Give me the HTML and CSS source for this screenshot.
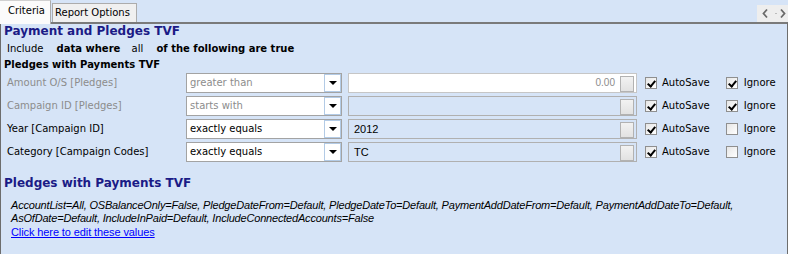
FILE: index.html
```html
<!DOCTYPE html>
<html lang="en">
<head>
    <meta charset="UTF-8">
    <title>Payment and Pledges TVF - Criteria</title>
    <link rel="stylesheet" href="styles.css">
</head>
<body>
    <div class="window">
        <div class="tabbar">
            <div class="tab active">Criteria</div>
            <div class="tab">Report Options</div>
            <div class="tab-nav">
                <svg width="31" height="17" viewBox="0 0 31 17">
                    <path d="M10 4.5 L6.5 8.5 L10 12.5" fill="none" stroke="#6a6a6a" stroke-width="1.8"/>
                    <rect x="18.5" y="8" width="1" height="1" fill="#8a8a8a"/>
                    <path d="M24 4.5 L27.5 8.5 L24 12.5" fill="none" stroke="#6a6a6a" stroke-width="1.8"/>
                </svg>
            </div>
        </div>

        <div class="panel">
            <h1 class="title">Payment and Pledges TVF</h1>
            <div class="include-line">
                <span>Include</span>
                <b class="gap-data">data where</b>
                <span class="gap-all">all</span>
                <b class="gap-of">of the following are true</b>
            </div>

            <h2 class="group-title">Pledges with Payments TVF</h2>

            <div class="criteria">
                <div class="row">
                    <div class="row-label disabled">Amount O/S [Pledges]</div>
                    <div class="combo disabled">
                        <span class="combo-text">greater than</span>
                        <span class="combo-btn"><i class="arrow"></i></span>
                    </div>
                    <div class="value-box white">
                        <span class="value-text right grey">0.00</span>
                        <span class="value-btn"></span>
                    </div>
                    <label class="check"><span class="check-box checked"></span><span class="check-label">AutoSave</span></label>
                    <label class="check ignore"><span class="check-box checked"></span><span class="check-label">Ignore</span></label>
                </div>

                <div class="row">
                    <div class="row-label disabled">Campaign ID [Pledges]</div>
                    <div class="combo disabled">
                        <span class="combo-text">starts with</span>
                        <span class="combo-btn"><i class="arrow"></i></span>
                    </div>
                    <div class="value-box">
                        <span class="value-text"></span>
                        <span class="value-btn"></span>
                    </div>
                    <label class="check"><span class="check-box checked"></span><span class="check-label">AutoSave</span></label>
                    <label class="check ignore"><span class="check-box checked"></span><span class="check-label">Ignore</span></label>
                </div>

                <div class="row">
                    <div class="row-label">Year [Campaign ID]</div>
                    <div class="combo">
                        <span class="combo-text">exactly equals</span>
                        <span class="combo-btn"><i class="arrow"></i></span>
                    </div>
                    <div class="value-box">
                        <span class="value-text">2012</span>
                        <span class="value-btn"></span>
                    </div>
                    <label class="check"><span class="check-box checked"></span><span class="check-label">AutoSave</span></label>
                    <label class="check ignore"><span class="check-box"></span><span class="check-label">Ignore</span></label>
                </div>

                <div class="row">
                    <div class="row-label">Category [Campaign Codes]</div>
                    <div class="combo">
                        <span class="combo-text">exactly equals</span>
                        <span class="combo-btn"><i class="arrow"></i></span>
                    </div>
                    <div class="value-box">
                        <span class="value-text">TC</span>
                        <span class="value-btn"></span>
                    </div>
                    <label class="check"><span class="check-box checked"></span><span class="check-label">AutoSave</span></label>
                    <label class="check ignore"><span class="check-box"></span><span class="check-label">Ignore</span></label>
                </div>
            </div>

            <div class="summary">
                <h2 class="title summary-title">Pledges with Payments TVF</h2>
                <p class="summary-text">AccountList=All, OSBalanceOnly=False, PledgeDateFrom=Default, PledgeDateTo=Default, PaymentAddDateFrom=Default, PaymentAddDateTo=Default,<br>AsOfDate=Default, IncludeInPaid=Default, IncludeConnectedAccounts=False</p>
                <a href="#" class="edit-link">Click here to edit these values</a>
            </div>
        </div>
    </div>
</body>
</html>
```

FILE: styles.css
```css
* {
    margin: 0;
    padding: 0;
    box-sizing: border-box;
}

body {
    font-family: 'DejaVu Sans', Tahoma, sans-serif;
    font-size: 10px;
    background: #d6e4f7;
    color: #000;
    width: 788px;
    height: 254px;
    overflow: hidden;
}

.window {
    height: 254px;
    display: flex;
    flex-direction: column;
}

/* tab strip */
.tabbar {
    height: 22px;
    display: flex;
    align-items: flex-end;
    position: relative;
    z-index: 2;
}

.tab {
    height: 19px;
    width: 85px;
    padding-left: 2px;
    line-height: 18px;
    background: #f0f0f0;
    border: 1px solid #acacac;
    border-bottom: none;
    margin-left: 1px;
    white-space: nowrap;
}

.tab.active {
    height: 24px;
    width: 51px;
    margin: 0 0 -2px 0;
    padding-left: 8px;
    line-height: 20px;
    background: #fbfbfb;
    border-left: none;
    border-top-color: #d0d0d0;
}

.tab-nav {
    margin-left: auto;
    align-self: flex-start;
    margin-top: 5px;
    width: 31px;
    height: 17px;
    background: #eeeeee;
}

.tab-nav svg {
    display: block;
}

/* main panel */
.panel {
    flex: 1;
    border-top: 2px solid #7a7a7a;
    border-left: 1px solid #6d6d6d;
    border-right: 1px solid #6d6d6d;
    padding-left: 3px;
}

.title {
    font-size: 12px;
    font-weight: bold;
    line-height: 15px;
    color: #1b1b86;
}

.include-line {
    margin-top: 3px;
    margin-left: 3px;
    line-height: 13px;
    white-space: nowrap;
}

.include-line b {
    font-weight: bold;
}

.gap-data { margin-left: 10px; }
.gap-all { margin-left: 8px; }
.gap-of { margin-left: 10px; }

.group-title {
    margin-top: 3px;
    font-size: 10px;
    font-weight: bold;
    line-height: 13px;
}

/* criteria rows */
.criteria {
    margin-top: 2px;
    margin-left: 3px;
    display: flex;
    flex-direction: column;
    gap: 3px;
}

.row {
    display: flex;
    align-items: center;
    height: 20px;
}

.row-label {
    width: 179px;
    line-height: 20px;
    white-space: nowrap;
}

.row-label.disabled,
.combo.disabled .combo-text {
    color: #8c8c8c;
}

.combo {
    width: 156px;
    height: 20px;
    background: #fff;
    border: 1px solid #a3a3a3;
    display: flex;
    align-items: center;
}

.combo-text {
    flex: 1;
    padding-left: 3px;
    line-height: 18px;
}

.combo-btn {
    width: 17px;
    height: 18px;
    border: 1px solid #b3cbe6;
    display: flex;
    align-items: center;
    justify-content: center;
}

.arrow {
    width: 0;
    height: 0;
    border-left: 4px solid transparent;
    border-right: 4px solid transparent;
    border-top: 4px solid #000;
}

.value-box {
    width: 289px;
    height: 20px;
    margin-left: 6px;
    border: 1px solid #b0b0b0;
    display: flex;
    align-items: center;
}

.value-box.white {
    background: #fff;
    border-color: #c6c6c6;
}

.value-text {
    flex: 1;
    padding-left: 5px;
    font-family: 'Liberation Sans', Arial, sans-serif;
    font-size: 11px;
    line-height: 18px;
}

.value-text.right {
    text-align: right;
    padding-right: 5px;
    font-size: 10px;
}

.value-text.grey {
    color: #8c8c8c;
}

.value-btn {
    width: 14px;
    height: 16px;
    margin: 2px 2px 0 0;
    background: linear-gradient(#f2f2f2, #e2e2e2);
    border: 1px solid #b2b2b2;
}

.check {
    display: flex;
    align-items: center;
    margin-left: 8px;
}

.check.ignore {
    margin-left: 16px;
}

.check-box {
    width: 12px;
    height: 12px;
    border: 1px solid #8f8f8f;
    background: linear-gradient(135deg, #e6e6e6, #ffffff);
    display: block;
    position: relative;
}

.check-box.checked::after {
    content: '';
    position: absolute;
    left: 3px;
    top: 1px;
    width: 3px;
    height: 6px;
    border-right: 2px solid #000;
    border-bottom: 2px solid #000;
    transform: rotate(40deg);
}

.check-label {
    margin-left: 5px;
    line-height: 20px;
}

.check.ignore .check-label {
    margin-left: 6px;
}

/* summary block */
.summary {
    margin-top: 14px;
}

.summary-text {
    margin-top: 8px;
    margin-left: 7px;
    font-family: 'Liberation Sans', Arial, sans-serif;
    font-style: italic;
    font-size: 11px;
    line-height: 13px;
    letter-spacing: -0.19px;
    white-space: nowrap;
}

.edit-link {
    display: inline-block;
    margin-top: 1px;
    margin-left: 7px;
    font-family: 'Liberation Sans', Arial, sans-serif;
    font-size: 11px;
    line-height: 13px;
    letter-spacing: -0.1px;
    color: #0000ff;
}
```
